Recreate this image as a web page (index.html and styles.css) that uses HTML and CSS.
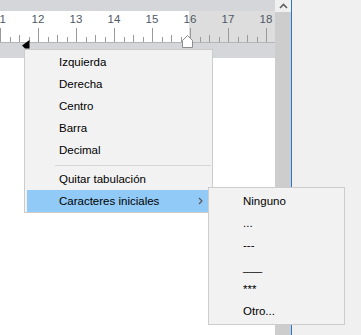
FILE: index.html
```html
<!DOCTYPE html>
<html lang="es">
<head>
    <meta charset="UTF-8">
    <title>Tabulaciones</title>
    <link rel="stylesheet" href="styles.css">
</head>
<body>
    <div class="screen">
        <div class="editor">
            <div class="topbar"></div>
            <div class="ruler">
                <div class="nums">
                    <span>11</span><span>12</span><span>13</span><span>14</span>
                    <span>15</span><span>16</span><span>17</span><span>18</span>
                </div>
                <svg class="ticks" width="275" height="14">
                    <defs>
                        <pattern id="tk" width="38" height="14" patternUnits="userSpaceOnUse">
                            <rect x="0" y="0" width="1" height="14" fill="#9a9a9a"/>
                            <rect x="10" y="9" width="1" height="5" fill="#9a9a9a"/>
                            <rect x="19" y="7" width="1" height="7" fill="#9a9a9a"/>
                            <rect x="29" y="9" width="1" height="5" fill="#9a9a9a"/>
                        </pattern>
                    </defs>
                    <rect width="275" height="14" fill="url(#tk)"/>
                </svg>
            </div>
            <div class="band"></div>
            <div class="page"></div>
            <svg class="tab-left" width="8" height="9" viewBox="0 0 8 9">
                <polygon points="7.5,0 7.5,8.5 3,8.5 0,5.5" fill="#000"/>
            </svg>
            <svg class="tab-right" width="13" height="13" viewBox="0 0 13 13">
                <polygon points="6.5,0.5 11.5,5.5 11.5,12.5 1.5,12.5 1.5,5.5" fill="#fff" stroke="#8c8c8c"/>
            </svg>
        </div>
        <div class="scrollbar">
            <div class="scroll-btn">
                <svg width="9" height="6" viewBox="0 0 9 6">
                    <polyline points="1,5 4.5,1.5 8,5" fill="none" stroke="#606060" stroke-width="1.6"/>
                </svg>
            </div>
            <div class="thumb"></div>
        </div>
        <div class="divider"></div>
        <div class="panel"></div>

        <div class="menu main-menu">
            <div class="item">Izquierda</div>
            <div class="item">Derecha</div>
            <div class="item">Centro</div>
            <div class="item">Barra</div>
            <div class="item">Decimal</div>
            <div class="sep"></div>
            <div class="item">Quitar tabulación</div>
            <div class="item active">
                Caracteres iniciales
                <svg class="arrow" width="5" height="8" viewBox="0 0 5 8">
                    <polyline points="1,1 4,4 1,7" fill="none" stroke="#555" stroke-width="1.1"/>
                </svg>
            </div>
        </div>

        <div class="menu sub-menu">
            <div class="item">Ninguno</div>
            <div class="item">...</div>
            <div class="item">---</div>
            <div class="item">___</div>
            <div class="item">***</div>
            <div class="item">Otro...</div>
        </div>
    </div>
</body>
</html>
```

FILE: styles.css
```css
body {
    margin: 0;
    font-family: "Liberation Sans", Arial, sans-serif;
}
.screen {
    position: relative;
    width: 361px;
    height: 335px;
    overflow: hidden;
    display: flex;
    background: #f0f0f0;
}
.editor {
    position: relative;
    width: 275px;
    display: flex;
    flex-direction: column;
}
.topbar {
    height: 11px;
    background: #d4d6d9;
}
.ruler {
    height: 31px;
    border-bottom: 1px solid #b4b6b9;
    background: linear-gradient(to right, #fff 189px, #dddddd 189px);
    display: flex;
    flex-direction: column;
    overflow: hidden;
}
.nums {
    display: flex;
    margin-left: -19px;
    padding-top: 2px;
    height: 15px;
    font-size: 11.5px;
    line-height: 12px;
    color: #4e5966;
}
.nums span {
    flex: 0 0 38px;
    text-align: center;
}
.ticks {
    display: block;
}
.tab-left {
    position: absolute;
    left: 22px;
    top: 40px;
}
.tab-right {
    position: absolute;
    left: 181px;
    top: 35px;
}
.band {
    height: 15px;
    background: #d4d6d9;
}
.page {
    flex: 1;
    background: #fff;
}
.scrollbar {
    width: 16px;
    display: flex;
    flex-direction: column;
    background: #f0f0f0;
}
.scroll-btn {
    height: 12px;
    display: flex;
    align-items: center;
    justify-content: center;
}
.thumb {
    flex: 1;
    background: #cdcdcd;
}
.divider {
    width: 1px;
    background: #2a74c9;
}
.panel {
    flex: 1;
    background: #f0f0f0;
}
.menu {
    position: absolute;
    background: #f2f2f2;
    border: 1px solid #cccccc;
    font-size: 11.5px;
    color: #000;
}
.main-menu {
    left: 24px;
    top: 49px;
    width: 182px;
    padding: 1px 3px 0 2px;
}
.sub-menu {
    left: 208px;
    top: 187px;
    width: 130px;
    padding: 2px 3px 2px 2px;
}
.item {
    position: relative;
    height: 22px;
    line-height: 22px;
    padding-left: 32px;
    white-space: nowrap;
}
.item.active {
    background: #91c9f7;
}
.arrow {
    position: absolute;
    right: 6px;
    top: 7px;
}
.sep {
    height: 1px;
    margin: 4px -2px 2px 28px;
    background: #d7d7d7;
}
```
